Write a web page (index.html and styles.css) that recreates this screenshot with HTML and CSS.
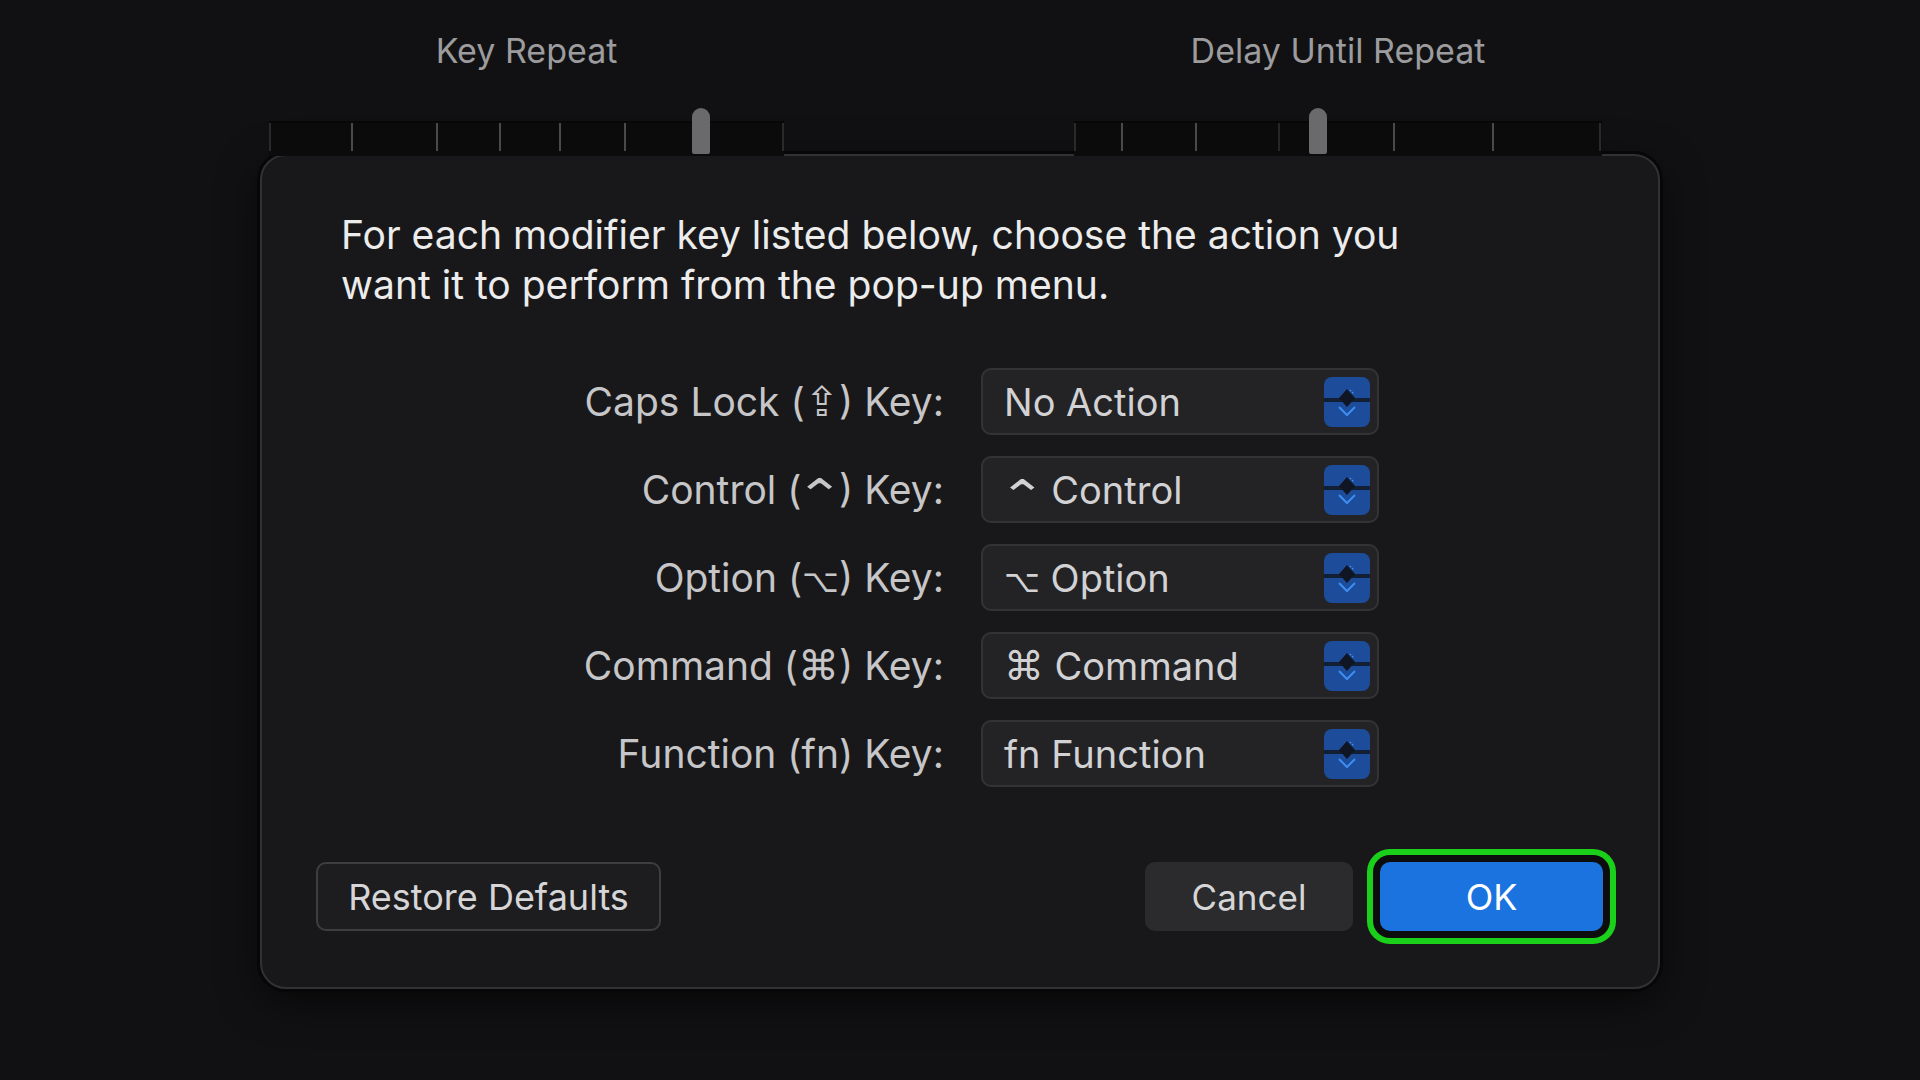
FILE: index.html
```html
<!DOCTYPE html>
<html lang="en">
<head>
<meta charset="utf-8">
<title>Modifier Keys</title>
<link rel="stylesheet" href="styles.css">
</head>
<body>
<div class="top">
  <div class="slider slider-left">
    <div class="slider-label">Key Repeat</div>
    <div class="track">
      <div class="bar">
        <span class="tick end" style="left:0px"></span>
        <span class="tick" style="left:82px"></span>
        <span class="tick" style="left:167px"></span>
        <span class="tick" style="left:230px"></span>
        <span class="tick" style="left:290px"></span>
        <span class="tick" style="left:355px"></span>
        <span class="tick end" style="left:513px"></span>
      </div>
      <span class="knob" style="left:423px"></span>
    </div>
  </div>
  <div class="slider slider-right">
    <div class="slider-label">Delay Until Repeat</div>
    <div class="track">
      <div class="bar">
        <span class="tick end" style="left:0px"></span>
        <span class="tick" style="left:47px"></span>
        <span class="tick" style="left:121px"></span>
        <span class="tick faint" style="left:204px"></span>
        <span class="tick" style="left:319px"></span>
        <span class="tick" style="left:418px"></span>
        <span class="tick end" style="left:525px"></span>
      </div>
      <span class="knob" style="left:235px"></span>
    </div>
  </div>
</div>

<div class="dialog">
  <p class="intro">For each modifier key listed below, choose the action you<br>want it to perform from the pop-up menu.</p>

  <div class="form">
    <div class="label">Caps Lock (<span class="sym">⇪</span>) Key:</div>
    <div class="popup"><span class="value">No Action</span><span class="stepper"><svg viewBox="0 0 46 50" width="46" height="50"><rect x="0" y="0" width="46" height="50" rx="8" fill="#1d4c9a"/><rect x="0" y="21" width="46" height="4" fill="#121722" opacity="0.85"/><polygon points="23,12 31,21 23,30 15,21" fill="#101522"/><line x1="26" y1="13" x2="30" y2="17" stroke="#3c8ef2" stroke-width="1.5" stroke-dasharray="1.5 1.5"/><polyline points="15,30 23,38 31,30" fill="none" stroke="#3c8ef2" stroke-width="2"/></svg></span></div>

    <div class="label">Control (<span class="sym caret">⌃</span>) Key:</div>
    <div class="popup"><span class="value"><span class="sym caret">⌃</span> Control</span><span class="stepper"><svg viewBox="0 0 46 50" width="46" height="50"><rect x="0" y="0" width="46" height="50" rx="8" fill="#1d4c9a"/><rect x="0" y="21" width="46" height="4" fill="#121722" opacity="0.85"/><polygon points="23,12 31,21 23,30 15,21" fill="#101522"/><line x1="26" y1="13" x2="30" y2="17" stroke="#3c8ef2" stroke-width="1.5" stroke-dasharray="1.5 1.5"/><polyline points="15,30 23,38 31,30" fill="none" stroke="#3c8ef2" stroke-width="2"/></svg></span></div>

    <div class="label">Option (<span class="sym opt">⌥</span>) Key:</div>
    <div class="popup"><span class="value"><span class="sym opt">⌥</span> Option</span><span class="stepper"><svg viewBox="0 0 46 50" width="46" height="50"><rect x="0" y="0" width="46" height="50" rx="8" fill="#1d4c9a"/><rect x="0" y="21" width="46" height="4" fill="#121722" opacity="0.85"/><polygon points="23,12 31,21 23,30 15,21" fill="#101522"/><line x1="26" y1="13" x2="30" y2="17" stroke="#3c8ef2" stroke-width="1.5" stroke-dasharray="1.5 1.5"/><polyline points="15,30 23,38 31,30" fill="none" stroke="#3c8ef2" stroke-width="2"/></svg></span></div>

    <div class="label">Command (<span class="sym">⌘</span>) Key:</div>
    <div class="popup"><span class="value"><span class="sym">⌘</span> Command</span><span class="stepper"><svg viewBox="0 0 46 50" width="46" height="50"><rect x="0" y="0" width="46" height="50" rx="8" fill="#1d4c9a"/><rect x="0" y="21" width="46" height="4" fill="#121722" opacity="0.85"/><polygon points="23,12 31,21 23,30 15,21" fill="#101522"/><line x1="26" y1="13" x2="30" y2="17" stroke="#3c8ef2" stroke-width="1.5" stroke-dasharray="1.5 1.5"/><polyline points="15,30 23,38 31,30" fill="none" stroke="#3c8ef2" stroke-width="2"/></svg></span></div>

    <div class="label">Function (fn) Key:</div>
    <div class="popup"><span class="value">fn Function</span><span class="stepper"><svg viewBox="0 0 46 50" width="46" height="50"><rect x="0" y="0" width="46" height="50" rx="8" fill="#1d4c9a"/><rect x="0" y="21" width="46" height="4" fill="#121722" opacity="0.85"/><polygon points="23,12 31,21 23,30 15,21" fill="#101522"/><line x1="26" y1="13" x2="30" y2="17" stroke="#3c8ef2" stroke-width="1.5" stroke-dasharray="1.5 1.5"/><polyline points="15,30 23,38 31,30" fill="none" stroke="#3c8ef2" stroke-width="2"/></svg></span></div>
  </div>

  <div class="actions">
    <button class="btn restore">Restore Defaults</button>
    <div class="spacer"></div>
    <button class="btn cancel">Cancel</button>
    <button class="btn ok">OK</button>
  </div>
</div>
</body>
</html>
```

FILE: styles.css
```css
html, body {
  margin: 0;
  padding: 0;
}
body {
  width: 1920px;
  height: 1080px;
  overflow: hidden;
  background: #111113;
  font-family: Inter, "Liberation Sans", "DejaVu Sans", sans-serif;
  color: #e6e6e6;
}

.top {
  display: flex;
  padding-left: 269px;
  gap: 290px;
  height: 154px;
  box-sizing: border-box;
}
.slider {
  display: flex;
  flex-direction: column;
  align-items: center;
}
.slider-left { width: 515px; }
.slider-right { width: 528px; }
.slider-label {
  margin-top: 31px;
  font-size: 34px;
  line-height: 40px;
  color: #9c9c9e;
  white-space: nowrap;
}
.track {
  position: relative;
  width: 100%;
  height: 46px;
  margin-top: 37px;
}
.bar {
  position: absolute;
  left: 0;
  right: 0;
  top: 13px;
  height: 33px;
  background: #0b0b0c;
  border-top: 2px solid #070707;
}
.tick {
  position: absolute;
  top: 0;
  width: 2px;
  height: 28px;
  background: #4a4a4d;
}
.tick.end { background: #2a2a2c; }
.tick.faint { background: #262628; }
.knob {
  position: absolute;
  top: 0;
  width: 18px;
  height: 46px;
  border-radius: 9px 9px 2px 2px;
  background: #6a6a6c;
}

.dialog {
  margin-left: 260px;
  width: 1400px;
  height: 835px;
  box-sizing: border-box;
  border: 2px solid #313133;
  border-radius: 26px;
  background: #18181a;
  box-shadow: 0 0 0 3px #070707, 0 12px 40px rgba(0, 0, 0, 0.6);
  padding: 54px 55px 56px;
  display: flex;
  flex-direction: column;
}
.intro {
  margin: 0 0 0 24px;
  font-size: 39.05px;
  line-height: 50px;
  color: #ececec;
  white-space: nowrap;
}
.form {
  display: grid;
  grid-template-columns: 603px 398px;
  grid-auto-rows: 67px;
  column-gap: 37px;
  row-gap: 21px;
  margin: 58px 0 0 24px;
}
.label {
  text-align: right;
  font-size: 39px;
  line-height: 67px;
  color: #c6c6c8;
  white-space: nowrap;
}
.sym {
  font-family: "DejaVu Sans", sans-serif;
  font-size: 1.05em;
}
.sym.caret {
  display: inline-block;
  font-size: 1.15em;
  line-height: 1;
  transform: translateY(0.16em) scaleX(1.3);
  margin: 0 0.0em;
}
.sym.opt {
  font-size: 0.82em;
}
.popup {
  box-sizing: border-box;
  height: 67px;
  border: 2px solid #333336;
  border-radius: 10px;
  background: #232326;
  display: flex;
  align-items: center;
  justify-content: space-between;
  padding: 0 7px 0 21px;
}
.value {
  font-size: 38px;
  color: #d2d2d4;
  white-space: nowrap;
}
.stepper {
  display: block;
  width: 46px;
  height: 50px;
}
.stepper svg { display: block; }

.actions {
  margin-top: auto;
  display: flex;
  align-items: center;
}
.spacer { flex: 1; }
.btn {
  height: 69px;
  box-sizing: border-box;
  border-radius: 10px;
  font-family: Inter, "Liberation Sans", sans-serif;
  font-size: 36px;
  color: #d6d6d8;
  padding: 0;
  border: none;
}
.restore {
  width: 345px;
  margin-left: -1px;
  border: 2px solid #3e3e41;
  background: #1d1d1f;
}
.cancel {
  width: 208px;
  background: #2b2b2d;
  margin-right: 27px;
  font-size: 35px;
}
.ok {
  width: 223px;
  background: #1a73de;
  color: #ffffff;
  box-shadow: 0 0 0 7px #0d0d0e, 0 0 0 13px #1bd01b;
}
```
